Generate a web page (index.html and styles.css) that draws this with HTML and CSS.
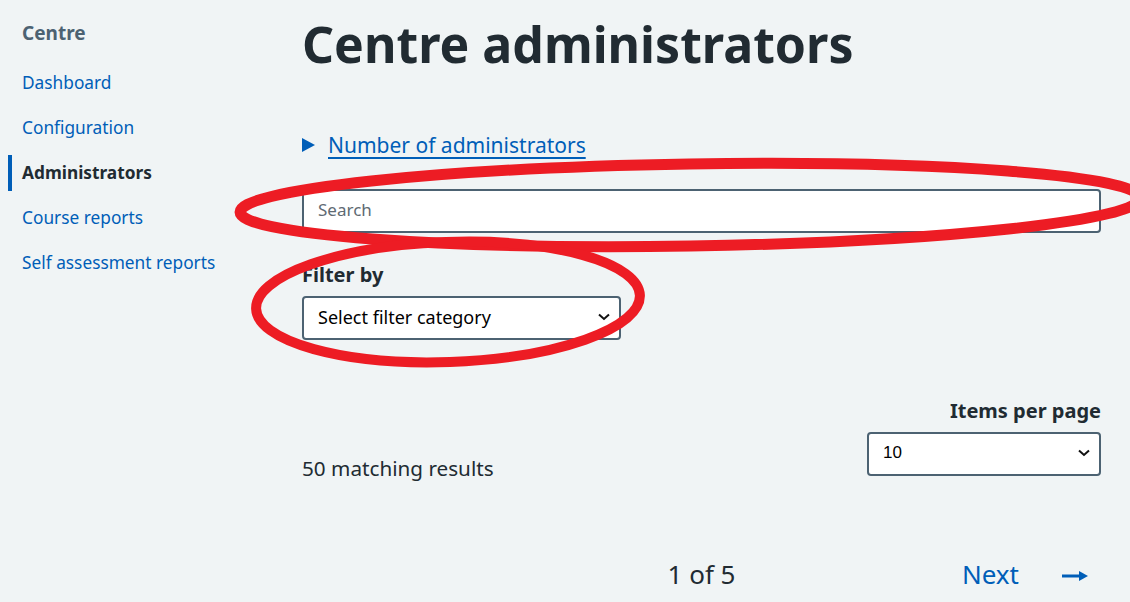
FILE: index.html
```html
<!DOCTYPE html>
<html lang="en">
<head>
<meta charset="utf-8">
<title>Centre administrators</title>
<link rel="stylesheet" href="styles.css">
</head>
<body>
<div class="page">
  <nav class="side">
    <h2 class="side-title">Centre</h2>
    <ul class="side-list">
      <li><a href="#">Dashboard</a></li>
      <li><a href="#">Configuration</a></li>
      <li class="active">Administrators</li>
      <li><a href="#">Course reports</a></li>
      <li><a href="#">Self assessment reports</a></li>
    </ul>
  </nav>
  <main class="main">
    <h1 class="title">Centre administrators</h1>
    <div class="details">
      <svg class="tri" width="13" height="14" viewBox="0 0 13 14"><path d="M0 0 L13 7 L0 14 Z" fill="#005eb8"/></svg>
      <a href="#" class="details-link">Number of administrators</a>
    </div>
    <div class="search">Search</div>
    <div class="label">Filter by</div>
    <div class="select filter-select">
      <span>Select filter category</span>
      <svg class="chev" width="12" height="8" viewBox="0 0 12 8"><path d="M1 1.5 L6 6 L11 1.5" fill="none" stroke="#111" stroke-width="2"/></svg>
    </div>
    <div class="results-row">
      <p class="results">50 matching results</p>
      <div class="ipp">
        <div class="label">Items per page</div>
        <div class="select ipp-select">
          <span class="ipp-val">10</span>
          <svg class="chev" width="12" height="8" viewBox="0 0 12 8"><path d="M1 1.5 L6 6 L11 1.5" fill="none" stroke="#111" stroke-width="2"/></svg>
        </div>
      </div>
    </div>
    <div class="pager">
      <span class="pager-count">1 of 5</span>
      <a href="#" class="pager-next">Next
        <svg class="arrow" width="26" height="12" viewBox="0 0 26 12"><path d="M0 6 H18" stroke="#005eb8" stroke-width="3"/><path d="M17 1 L26 6 L17 11 Z" fill="#005eb8"/></svg>
      </a>
    </div>
  </main>
  <svg class="annot" width="1130" height="602" viewBox="0 0 1130 602">
    <ellipse cx="690" cy="205" rx="450" ry="41" transform="rotate(-0.9 690 205)" fill="none" stroke="#ed1c24" stroke-width="11"/>
    <ellipse cx="448" cy="302" rx="192" ry="60" transform="rotate(-2 448 302)" fill="none" stroke="#ed1c24" stroke-width="10"/>
  </svg>
</div>
</body>
</html>
```

FILE: styles.css
```css
* { box-sizing: border-box; }
html, body { margin: 0; padding: 0; }
body {
  background: #f0f4f5;
  color: #212b32;
  font-family: "Noto Sans", "Open Sans", sans-serif;
  width: 1130px;
  height: 602px;
  overflow: hidden;
}
.page {
  position: relative;
  display: grid;
  grid-template-columns: 302px 799px;
  height: 602px;
}
.side { padding-top: 21px; }
.side-title {
  margin: 0 0 20px 22px;
  font-size: 19px;
  line-height: 24px;
  font-weight: 700;
  color: #4c6272;
}
.side-list { list-style: none; margin: 0; padding: 0; }
.side-list li {
  margin: 0 0 9px 8px;
  padding: 6px 0 6px 10px;
  border-left: 4px solid transparent;
  font-size: 17.3px;
  line-height: 24px;
}
.side-list a { color: #005eb8; text-decoration: none; }
.side-list li.active {
  border-left-color: #005eb8;
  font-weight: 700;
  color: #212b32;
}
.main { padding-top: 16px; display: flex; flex-direction: column; }
.title {
  margin: 0;
  font-size: 50px;
  line-height: 56px;
  font-weight: 700;
  color: #212b32;
}
.details {
  margin-top: 61px;
  display: flex;
  align-items: center;
  gap: 13px;
  font-size: 21px;
  line-height: 24px;
}
.tri { display: block; }
.details-link { color: #005eb8; text-decoration: underline; text-underline-offset: 4px; text-decoration-thickness: 2px; }
.search {
  margin-top: 32px;
  height: 44px;
  border: 2px solid #4c6272;
  border-radius: 4px;
  background: #fff;
  padding: 0 14px 3px;
  display: flex;
  align-items: center;
  font-size: 17px;
  line-height: 20px;
  color: #5e6a73;
}
.label {
  font-size: 20px;
  line-height: 24px;
  font-weight: 700;
  color: #212b32;
}
.main > .label { margin-top: 30px; }
.select {
  margin-top: 9px;
  height: 44px;
  border: 2px solid #4c6272;
  border-radius: 4px;
  background: #fff;
  padding: 0 9px 2px 14px;
  display: flex;
  align-items: center;
  justify-content: space-between;
  font-size: 18px;
  color: #000;
}
.filter-select { width: 319px; }
.chev { display: block; }
.results-row {
  margin-top: 59px;
  display: flex;
  justify-content: space-between;
  align-items: flex-end;
}
.results {
  margin: 0 0 -4px 0;
  font-size: 20.7px;
  line-height: 24px;
}
.ipp { display: flex; flex-direction: column; align-items: flex-end; }
.ipp-select { width: 234px; }
.ipp-val { font-family: "Liberation Sans", Arial, sans-serif; font-size: 17px; }
.pager {
  margin-top: 82px;
  display: grid;
  grid-template-columns: 1fr auto 1fr;
  align-items: center;
  font-size: 26px;
  line-height: 32px;
}
.pager-count { grid-column: 2; }
.pager-next {
  grid-column: 3;
  justify-self: end;
  margin-right: 13px;
  display: flex;
  align-items: center;
  gap: 43px;
  color: #005eb8;
  text-decoration: none;
}
.arrow { display: block; margin-top: 4px; }
.annot { position: absolute; left: 0; top: 0; pointer-events: none; }
```
